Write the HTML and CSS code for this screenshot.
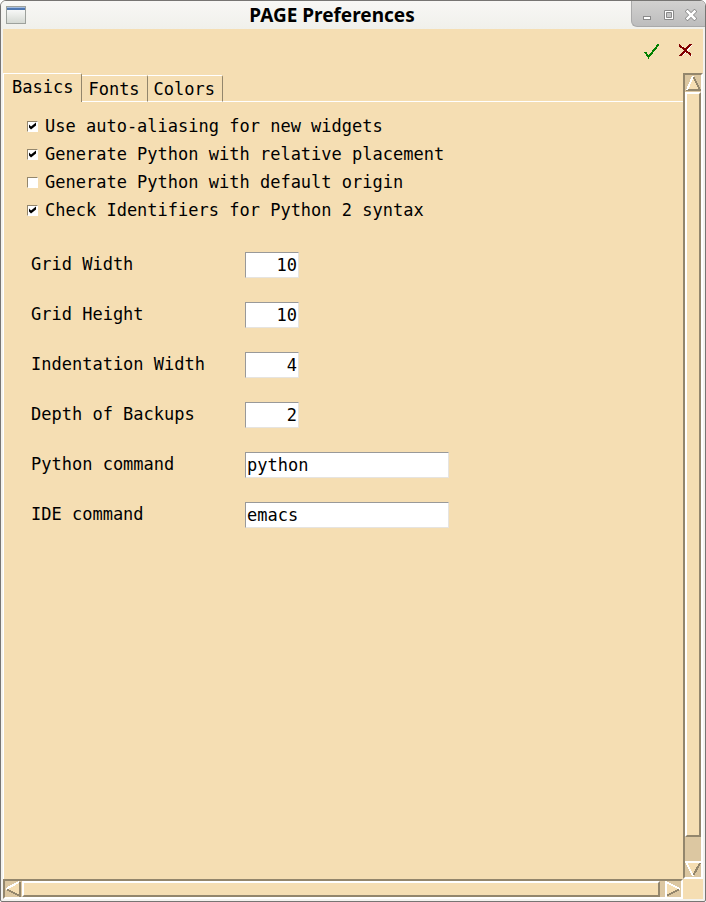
FILE: index.html
```html
<!DOCTYPE html>
<html lang="en">
<head>
<meta charset="utf-8">
<title>PAGE Preferences</title>
<link rel="stylesheet" href="styles.css">
</head>
<body>
<main class="window">
  <header class="titlebar">
    <svg class="app-icon" width="20" height="18" viewBox="0 0 20 18" shape-rendering="crispEdges" aria-hidden="true">
      <defs><linearGradient id="pane" x1="0" y1="0" x2="0" y2="1"><stop offset="0" stop-color="#fff"/><stop offset="1" stop-color="#d5d9d3"/></linearGradient></defs>
      <rect x="0" y="0" width="20" height="18" fill="#9da19c"/>
      <rect x="1" y="1" width="18" height="16" fill="url(#pane)"/>
      <rect x="1" y="1" width="18" height="1" fill="#a4bcdf"/>
      <rect x="1" y="2" width="18" height="2" fill="#4f78b3"/>
    </svg>
    <h1 class="title">PAGE Preferences</h1>
    <div class="window-controls">
      <button type="button" class="window-button" aria-label="Minimize"><svg width="12" height="12" viewBox="0 0 12 12"><rect x="2.500" y="7.500" width="7" height="3" fill="#fff" stroke="#8a8a8a"/></svg></button>
      <button type="button" class="window-button" aria-label="Maximize"><svg width="12" height="12" viewBox="0 0 12 12"><path d="M1.500 1.500h9v9h-9z" fill="#fff" stroke="#8a8a8a"/><path d="M3.500 3.500h5v5h-5z" fill="#c4c4c4" stroke="#8a8a8a"/></svg></button>
      <button type="button" class="window-button" aria-label="Close"><svg width="12" height="12" viewBox="0 0 12 12"><path d="M2.500 2.500l7 7m0-7l-7 7" stroke="#888" stroke-width="4" stroke-linecap="square"/><path d="M2.500 2.500l7 7m0-7l-7 7" stroke="#fff" stroke-width="2.500" stroke-linecap="square"/></svg></button>
    </div>
  </header>
  <div class="toolbar">
    <button type="button" class="tool" aria-label="Apply"><svg width="16" height="16" viewBox="0 0 16 16" shape-rendering="crispEdges"><path d="M2 9l3.500 5L15.500 1.500" fill="none" stroke="#008000" stroke-width="2"/></svg></button>
    <button type="button" class="tool" aria-label="Cancel"><svg width="16" height="16" viewBox="0 0 16 16" shape-rendering="crispEdges"><path d="M15 2L6 12M5 3l10 10" fill="none" stroke="#fff" stroke-width="1"/><path d="M2 2l12 10M14 1L3 13" fill="none" stroke="#800000" stroke-width="2"/></svg></button>
  </div>
  <div class="scroll-area">
    <section class="notebook">
      <div class="tabs" role="tablist">
        <button type="button" class="tab tab-active" role="tab" aria-selected="true">Basics</button>
        <button type="button" class="tab" role="tab" aria-selected="false">Fonts</button>
        <button type="button" class="tab" role="tab" aria-selected="false">Colors</button>
        <span class="tab-rule"></span>
      </div>
      <form class="page">
        <div class="options">
          <label class="option"><input type="checkbox" checked>Use auto-aliasing for new widgets</label>
          <label class="option"><input type="checkbox" checked>Generate Python with relative placement</label>
          <label class="option"><input type="checkbox">Generate Python with default origin</label>
          <label class="option"><input type="checkbox" checked>Check Identifiers for Python 2 syntax</label>
        </div>
        <div class="fields">
          <label for="grid-width">Grid Width</label><input class="number" id="grid-width" type="text" value="10">
          <label for="grid-height">Grid Height</label><input class="number" id="grid-height" type="text" value="10">
          <label for="indent">Indentation Width</label><input class="number" id="indent" type="text" value="4">
          <label for="backups">Depth of Backups</label><input class="number" id="backups" type="text" value="2">
          <label for="python">Python command</label><input class="command" id="python" type="text" value="python">
          <label for="ide">IDE command</label><input class="command" id="ide" type="text" value="emacs">
        </div>
      </form>
    </section>
    <div class="scrollbar vertical">
      <button type="button" class="arrow" aria-label="Scroll up"><svg width="16" height="16" viewBox="0 0 16 16" shape-rendering="crispEdges"><path d="M8 1L1 15h14z" fill="#f5deb3"/><path d="M1 15h14L8 1" fill="none" stroke="#93866c" stroke-width="2"/><path d="M8 1L2 15" stroke="#fff" stroke-width="2"/></svg></button>
      <div class="track"><div class="thumb"></div></div>
      <button type="button" class="arrow" aria-label="Scroll down"><svg width="16" height="16" viewBox="0 0 16 16" shape-rendering="crispEdges"><path d="M0 1h16L8 15z" fill="#f5deb3"/><path d="M15 2L8 15" stroke="#93866c" stroke-width="2"/><path d="M16 1H1l7 14" fill="none" stroke="#fff" stroke-width="2"/></svg></button>
    </div>
    <div class="scrollbar horizontal">
      <button type="button" class="arrow" aria-label="Scroll left"><svg width="16" height="16" viewBox="0 0 16 16" shape-rendering="crispEdges"><path d="M1 8L15 1v14z" fill="#f5deb3"/><path d="M1 8l14 7V1" fill="none" stroke="#93866c" stroke-width="2"/><path d="M1 8L14 1" stroke="#fff" stroke-width="2"/></svg></button>
      <div class="track"><div class="thumb"></div></div>
      <button type="button" class="arrow" aria-label="Scroll right"><svg width="16" height="16" viewBox="0 0 16 16" shape-rendering="crispEdges"><path d="M1 0v16l14-8z" fill="#f5deb3"/><path d="M1 15l14-7" stroke="#93866c" stroke-width="2"/><path d="M1 16V1l14 7" fill="none" stroke="#fff" stroke-width="2"/></svg></button>
    </div>
  </div>
</main>
</body>
</html>
```
FILE: styles.css
```css
* {
  box-sizing: border-box;
}

body {
  margin: 0;
  background: #fff;
  color: #000;
  font: 17px/20px "DejaVu Sans Mono", monospace;
}

button,
input {
  margin: 0;
  padding: 0;
  border: 0;
  border-radius: 0;
  background: none;
  color: inherit;
  font: inherit;
}

svg {
  display: block;
}

.window {
  display: flex;
  flex-direction: column;
  min-height: 100vh;
  padding: 0 2px 2px;
  border: 1px solid #777573;
  border-radius: 6px 6px 2px 2px;
  background: #f3f2ee;
}

.titlebar {
  display: grid;
  grid-template-columns: 74px 1fr 74px;
  align-items: center;
  height: 28px;
  margin: 0 -2px;
  border-radius: 5px 5px 0 0;
  background: linear-gradient(#f8f7f5, #f0f0eb);
}

.app-icon {
  margin-left: 5px;
}

.title {
  margin: 0 0 0 -42px;
  font: bold 19px/28px "Noto Sans", sans-serif;
  text-align: center;
}

.window-controls {
  display: flex;
  align-self: start;
  justify-content: center;
  gap: 10px;
  height: 26px;
  padding-top: 8px;
  border: solid #a9a9a9;
  border-width: 0 0 1px 1px;
  border-radius: 0 5px 0 6px;
  background: linear-gradient(#d2d1d0, #bdbdbd);
}

.window-button {
  width: 12px;
  height: 12px;
}

.toolbar {
  display: flex;
  justify-content: flex-end;
  gap: 18px;
  height: 44px;
  padding: 14px 10px 0 0;
  background: #f5deb3;
}

.tool {
  width: 16px;
  height: 16px;
}

.scroll-area {
  display: grid;
  flex: 1;
  grid-template: 1fr 20px / 1fr 20px;
  background: #f5deb3;
}

.notebook {
  border-left: 1px solid #fff;
}

.tabs {
  display: flex;
  align-items: flex-end;
  height: 29px;
}

.tab {
  height: 27px;
  padding: 0 7px 0 6px;
  border: solid #fff;
  border-width: 1px 0;
  border-right: 1px solid #93866c;
  border-top-right-radius: 2px;
}

.tab-active {
  height: 29px;
  padding: 0 8px 2px;
  border-bottom: 0;
}

.tab-rule {
  flex: 1;
  border-bottom: 1px solid #fff;
}

.page {
  padding: 10px 23px;
}

.option {
  display: flex;
  align-items: center;
  gap: 7px;
  height: 28px;
}

.option input {
  width: 11px;
  height: 11px;
  border: 1px solid #fff;
  border-top-color: #93866c;
  border-left-color: #93866c;
  background: #fff;
  appearance: none;
}

.option input:checked::before {
  display: block;
  width: 9px;
  height: 9px;
  background: #000;
  clip-path: polygon(1px 3px, 3px 5px, 8px 1px, 8px 4px, 3px 8px, 1px 6px);
  content: "";
}

.fields {
  display: grid;
  grid-template-columns: 214px 1fr;
  row-gap: 24px;
  padding: 28px 4px 0;
}

.fields label {
  line-height: 24px;
}

.fields input {
  height: 26px;
  padding: 0 1px;
  border: 1px solid #e6e4e0;
  border-top-color: #999;
  border-left-color: #999;
  background: #fff;
}

.fields .number {
  width: 54px;
  text-align: right;
}

.fields .command {
  width: 204px;
}

.scrollbar {
  display: flex;
  border: 2px solid #fff;
  border-top-color: #93866c;
  border-left-color: #93866c;
  background: #dcc7a1;
}

.vertical {
  flex-direction: column;
}

.arrow {
  flex: none;
  width: 16px;
  height: 16px;
}

.track {
  display: flex;
  flex: 1;
  flex-direction: inherit;
}

.vertical .track {
  padding: 1px 0 24px;
}

.horizontal .track {
  padding: 0 5px 0 1px;
}

.thumb {
  flex: 1;
  border: 2px solid #fff;
  border-right-color: #93866c;
  border-bottom-color: #93866c;
  background: #f5deb3;
}
```
